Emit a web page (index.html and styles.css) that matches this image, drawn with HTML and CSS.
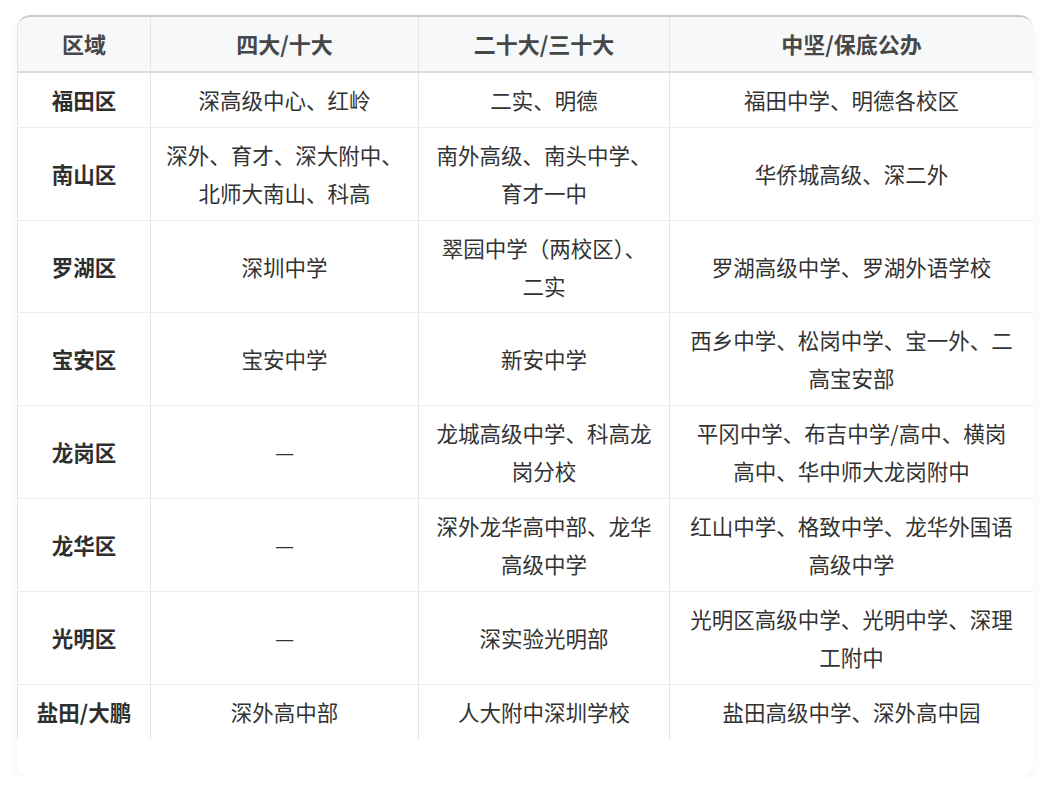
FILE: index.html
```html
<!DOCTYPE html>
<html lang="zh-CN">
<head>
<meta charset="utf-8">
<title>深圳高中分布</title>
<link rel="stylesheet" href="styles.css">
</head>
<body>
<div class="card">
  <table class="schools">
    <colgroup>
      <col class="c1"><col class="c2"><col class="c3"><col class="c4">
    </colgroup>
    <thead>
      <tr><th>区域</th><th>四大/十大</th><th>二十大/三十大</th><th>中坚/保底公办</th></tr>
    </thead>
    <tbody>
      <tr><td class="area">福田区</td><td>深高级中心、红岭</td><td>二实、明德</td><td>福田中学、明德各校区</td></tr>
      <tr><td class="area">南山区</td><td>深外、育才、深大附中、北师大南山、科高</td><td>南外高级、南头中学、育才一中</td><td>华侨城高级、深二外</td></tr>
      <tr><td class="area">罗湖区</td><td>深圳中学</td><td>翠园中学（两校区）、二实</td><td>罗湖高级中学、罗湖外语学校</td></tr>
      <tr><td class="area">宝安区</td><td>宝安中学</td><td>新安中学</td><td>西乡中学、松岗中学、宝一外、二高宝安部</td></tr>
      <tr><td class="area">龙岗区</td><td>—</td><td>龙城高级中学、科高龙岗分校</td><td>平冈中学、布吉中学/高中、横岗高中、华中师大龙岗附中</td></tr>
      <tr><td class="area">龙华区</td><td>—</td><td>深外龙华高中部、龙华高级中学</td><td>红山中学、格致中学、龙华外国语高级中学</td></tr>
      <tr><td class="area">光明区</td><td>—</td><td>深实验光明部</td><td>光明区高级中学、光明中学、深理工附中</td></tr>
      <tr><td class="area">盐田/大鹏</td><td>深外高中部</td><td>人大附中深圳学校</td><td>盐田高级中学、深外高中园</td></tr>
    </tbody>
  </table>
</div>
</body>
</html>
```

FILE: styles.css
```css
html, body {
  margin: 0;
  padding: 0;
  background: #ffffff;
}

body {
  font-family: "Noto Sans CJK SC", "Noto Sans", "Liberation Sans", sans-serif;
  color: #333333;
}

.card {
  margin: 15px 0 0 17px;
  width: 1016px;
  box-sizing: border-box;
  background: #ffffff;
  border-top: 2px solid #c9c9c9;
  border-radius: 14px;
  overflow: hidden;
  padding-bottom: 38px;
  box-shadow: 0 6px 14px rgba(0, 0, 0, 0.05);
}

.schools {
  width: 100%;
  border-collapse: collapse;
  table-layout: fixed;
  font-size: 21.5px;
  line-height: 37.9px;
}

.schools col.c1 { width: 133px; }
.schools col.c2 { width: 268px; }
.schools col.c3 { width: 251px; }
.schools col.c4 { width: 364px; }

.schools th,
.schools td {
  border-left: 1px solid #e4e4e4;
  border-right: 1px solid #e4e4e4;
  border-bottom: 1px solid #ececec;
  padding: 8px 14px;
  text-align: center;
  vertical-align: middle;
}

.schools th:nth-child(4),
.schools td:nth-child(4) {
  padding-left: 18px;
  padding-right: 18px;
}

.schools th {
  background: #f6f8fa;
  color: #474747;
  font-weight: 700;
  font-size: 22px;
  border-bottom: 2px solid #dcdcdc;
}

.schools tbody tr:last-child td {
  border-bottom: none;
}

.schools td {
  color: #333333;
  font-weight: 400;
}

.schools td.area {
  font-weight: 700;
  color: #2f2f2f;
}
```
